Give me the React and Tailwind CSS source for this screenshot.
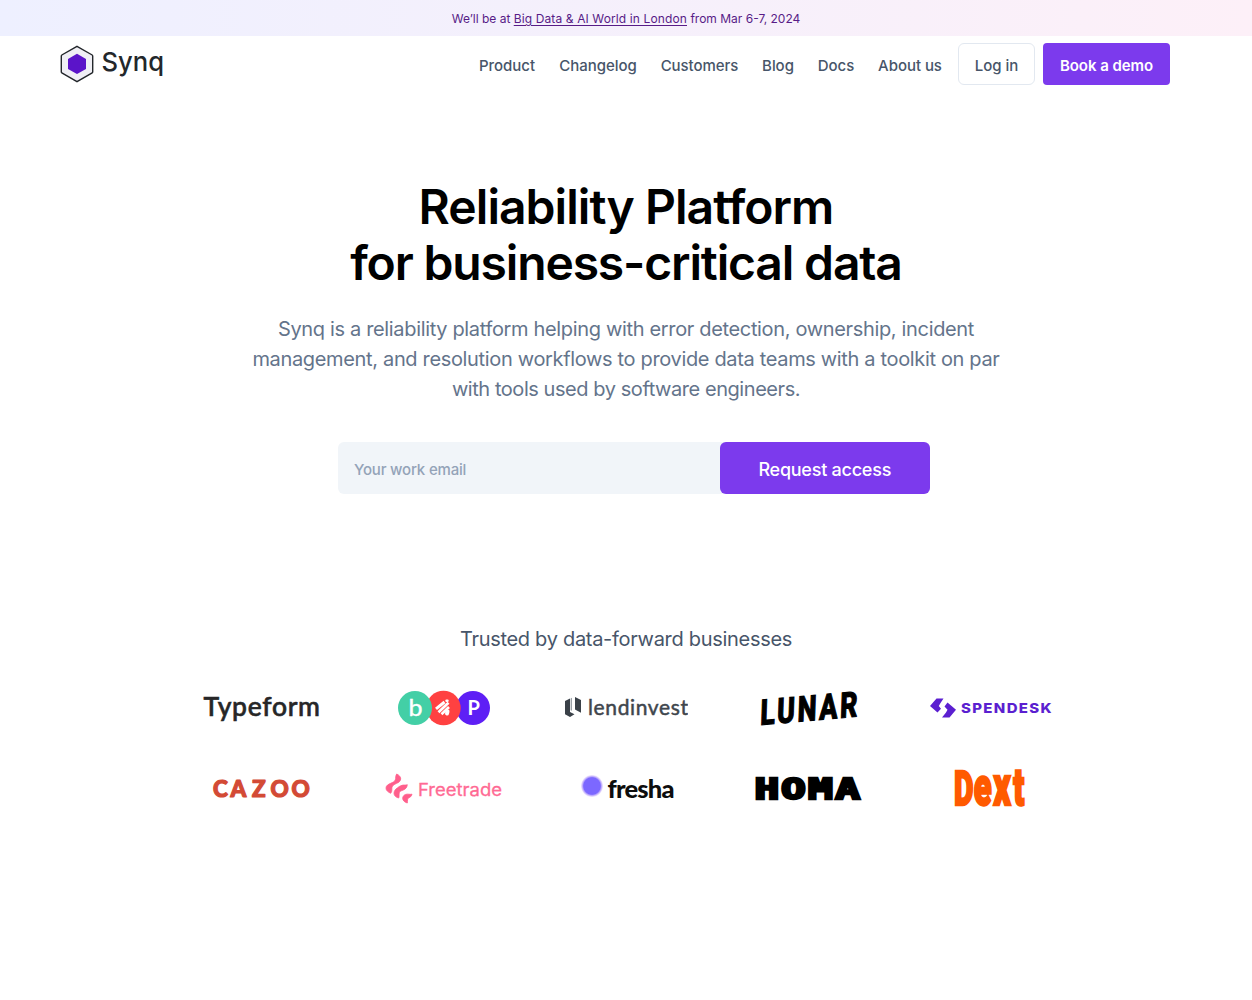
import clsx from 'clsx'

const navLinks = [
  { label: 'Product', width: 'w-[56px]' },
  { label: 'Changelog', width: 'w-[78px]' },
  { label: 'Customers', width: 'w-[77px]' },
  { label: 'Blog', width: 'w-[32px]' },
  { label: 'Docs', width: 'w-[36px]' },
  { label: 'About us', width: 'w-[64px]' },
]

function Banner() {
  return (
    <div className="flex h-9 items-center justify-center bg-gradient-to-r from-[#eef0ff] to-[#fdf0f8] pt-0.5 text-[12px] tracking-[0px] text-[#581c87]">
      <p>
        We’ll be at{' '}
        <a href="#" className="tracking-[0.12px] underline underline-offset-2">Big Data &amp; AI World in London</a>
        {' '}from Mar 6-7, 2024
      </p>
    </div>
  )
}

function SynqLogo() {
  return (
    <svg width="108" height="40" viewBox="0 0 108 40" className="shrink-0">
      <path d="M17 2.3 L32.2 11 Q32.7 11.3 32.7 11.9 V28 Q32.7 28.600 32.2 28.900 L17 37.600 L1.8 28.900 Q1.3 28.600 1.3 28 V11.900 Q1.3 11.300 1.8 11 Z" fill="#f0eff5" stroke="#23272b" strokeWidth="1.4" />
      <path d="M17 9.8 L26 14.9 V24.9 L17 30 L8 24.9 V14.9 Z" fill="#5b14c9" />
      <text x="41.500" y="27" fontFamily="Inter, sans-serif" fontSize="26" fontWeight="500" fill="#23272b" textLength="62.500" lengthAdjust="spacingAndGlyphs">Synq</text>
    </svg>
  )
}

function Header() {
  return (
    <header className="flex h-14 items-center justify-between pr-[82px] pl-[60px]">
      <SynqLogo />
      <div className="flex items-center text-[15px] font-medium tracking-[-0.05px] text-[#475569]">
        <nav className="flex gap-6 pt-1 whitespace-nowrap">
          {navLinks.map((link) => (
            <a key={link.label} href="#" className={clsx('flex justify-center', link.width)}>
              {link.label}
            </a>
          ))}
        </nav>
        <a href="#" className="ml-4 flex h-[42px] w-[77px] items-center justify-center rounded-md border border-[#e2e8f0] pt-1">
          Log in
        </a>
        <a href="#" className="ml-2 flex h-[42px] w-[127px] items-center justify-center rounded bg-[#7c3aed] pt-1 font-semibold text-white">
          Book a demo
        </a>
      </div>
    </header>
  )
}

function Hero() {
  return (
    <section className="flex flex-col items-center pt-[87px] text-center">
      <h1 className="text-[48px] leading-[56px] font-semibold tracking-[-1.15px] text-black">
        <span className="tracking-[-0.95px]">Reliability Platform</span>
        <br />
        for business-critical data
      </h1>
      <p className="mt-[23px] text-[20px] leading-[30px] tracking-[-0.34px] whitespace-nowrap text-[#64748b]">
        Synq is a reliability platform helping with error detection, ownership, incident
        <br />
        management, and resolution workflows to provide data teams with a toolkit on par
        <br />
        <span className="tracking-[-0.44px]">with tools used by software engineers.</span>
      </p>
      <form className="mt-[38px] ml-4 flex h-[52px] w-[592px] rounded-md bg-[#f1f5f9]">
        <input
          type="email"
          placeholder="Your work email"
          className="min-w-0 flex-1 px-4 pt-1 text-[15px] font-medium tracking-[-0.18px] outline-none placeholder:text-[#94a3b8]"
        />
        <button type="button" className="w-[210.5px] rounded-md bg-[#7c3aed] pt-0.5 text-[18px] font-medium tracking-[-0.24px] text-white">
          Request access
        </button>
      </form>
    </section>
  )
}

function Typeform() {
  return (
    <svg width="120" height="36" viewBox="0 0 120 36">
      <text x="2.500" y="25.500" fontFamily="Lato, sans-serif" fontSize="26.500" fontWeight="500" fill="#262627" stroke="#262627" strokeWidth="0.6" textLength="116.500" lengthAdjust="spacing">Typeform</text>
    </svg>
  )
}

function Brands() {
  return (
    <svg width="94" height="36" viewBox="0 0 94 36">
      <circle cx="76" cy="18" r="17" fill="#5e1ff5" />
      <circle cx="46.500" cy="18" r="17.200" fill="#ff4141" />
      <circle cx="18" cy="18" r="17" fill="#43cfa6" />
      <text x="11.500" y="26" fontFamily="Lato, sans-serif" fontSize="23" fontWeight="400" fill="#fff" stroke="#fff" strokeWidth="0.4" textLength="14" lengthAdjust="spacingAndGlyphs">b</text>
      <text x="70.500" y="25" fontFamily="Lato, sans-serif" fontSize="20" fontWeight="700" fill="#fff">P</text>
      <g stroke="#fff" fill="none">
        <path d="M39 18.800 L47.500 12" strokeWidth="3" />
        <path d="M41.500 22.300 L51.500 12.800" strokeWidth="2.800" />
        <path d="M44.500 24.300 L52 17" strokeWidth="2.600" />
        <path d="M50 23.500 L50.500 21.500" strokeWidth="4" strokeLinecap="round" />
        <path d="M49.500 10.800 H50.500" strokeWidth="2.400" strokeLinecap="round" />
      </g>
    </svg>
  )
}

function Lendinvest() {
  return (
    <svg width="124" height="36" viewBox="0 0 124 36">
      <g fill="#3a4148">
        <path d="M1 11 L6 8.500 V22 L10.500 24.300 L6 27 L1 24.300 Z" />
        <path d="M11 7 L17 10 V22.800 L11 19.500 Z" />
        <path d="M6.600 8.500 L8 7.800 V20.800 L6.600 20.200 Z" fill="#9aa0a6" />
      </g>
      <text x="24" y="25" fontFamily="Lato, sans-serif" fontSize="21" fontWeight="400" fill="#3f464d" stroke="#3f464d" strokeWidth="0.5" textLength="100" lengthAdjust="spacing">lendinvest</text>
    </svg>
  )
}

function Lunar() {
  return (
    <svg width="120" height="56" viewBox="0 0 120 56" className="shrink-0 overflow-visible">
      <g transform="translate(12 45) rotate(-5) skewX(-7) scale(0.770 1)">
        <text x="0" y="0" fontFamily="Roboto, sans-serif" fontSize="35" fontWeight="800" letterSpacing="3.400" fill="#000" stroke="#000" strokeWidth="1.200">LUNAR</text>
      </g>
    </svg>
  )
}

function Spendesk() {
  return (
    <svg width="124" height="36" viewBox="0 0 124 36">
      <g fill="#5b1fd0">
        <path d="M1 16 L7.500 8.500 H14.500 L11.500 13 L9.800 16 L12 18.800 L8.500 22.500 Z" />
        <path d="M27 19.800 L20.500 27.500 H13 L17 22.500 L18.500 19.800 L15.500 16.500 L18.500 12.500 Z" />
      </g>
      <text x="32" y="22.500" fontFamily="Inter, sans-serif" fontSize="13.500" fontWeight="800" letterSpacing="1.200" fill="#5b1fd0" textLength="92" lengthAdjust="spacingAndGlyphs">SPENDESK</text>
    </svg>
  )
}

function Cazoo() {
  return (
    <svg width="98" height="36" viewBox="0 0 98 36" className="overflow-visible">
      <text x="1 18.500 40 58.500 79.500" y="26.500" fontFamily="Lato, sans-serif" fontSize="22.500" fontWeight="900" fill="#d34a35" stroke="#d34a35" strokeWidth="1.200" strokeLinejoin="round">CAZOO</text>
    </svg>
  )
}

function Freetrade() {
  return (
    <svg width="118" height="36" viewBox="0 0 118 36">
      <g fill="#ff5f8c" stroke="#ff5f8c" strokeWidth="0.800" strokeLinejoin="round">
        <path d="M11.700 4 C14 5 16 7 15.700 9 C15.500 11.500 13.500 12.500 11.700 13.300 C9 14.500 7.500 15.500 7 17.300 C6.500 19.500 7.500 21 5.700 23.300 C3 22 1 20.500 1 18 C1 15.500 3.500 14.300 5.700 13.300 C8 12.300 9.700 11.500 10.300 10 C11 8 10.300 6 11.700 4 Z" />
        <path d="M22.300 14.700 C22 17.500 20.500 19.200 18.300 20 C16 20.900 14.700 21.300 14.300 22.700 C13.700 24.500 14.500 26 13.700 28 C11 27.500 9 25.500 9 23.300 C9 21 10.500 19 12.300 18 C14 16.500 15.500 15.800 17 15.300 C19 14.700 20.500 15.500 22.300 14.700 Z" />
        <path d="M27 24.200 C26.500 26.500 25 27.300 23.500 28 C22 29 22.800 30.500 22.300 33 C19.500 32.300 17.500 30.300 17.700 28 C18 26 19 25 20.700 24.400 C22.700 23.700 25 24.700 27 24.200 Z" />
      </g>
      <text x="33" y="25.500" fontFamily="Inter, sans-serif" fontSize="17.500" fontWeight="400" fill="#ff6a94" stroke="#ff6a94" strokeWidth="0.3" textLength="84" lengthAdjust="spacingAndGlyphs">Freetrade</text>
    </svg>
  )
}

function Fresha() {
  return (
    <svg width="98" height="40" viewBox="0 0 98 40" className="overflow-visible">
      <defs>
        <radialGradient id="fresha-dot">
          <stop offset="0.760" stopColor="#7c68ff" />
          <stop offset="1" stopColor="#c9a8f8" stopOpacity="0.250" />
        </radialGradient>
      </defs>
      <circle cx="15" cy="18" r="11" fill="url(#fresha-dot)" />
      <text x="30.500" y="30" fontFamily="Lato, sans-serif" fontSize="25.500" fontWeight="900" fill="#0d0d0d" textLength="67" lengthAdjust="spacing">fresha</text>
    </svg>
  )
}

function Homa() {
  return (
    <svg width="108" height="40" viewBox="0 0 108 40" className="overflow-visible">
      <g transform="translate(0 31) scale(1.420 1)">
        <text x="0.400 19.100 38 57.200" y="0" fontFamily="'DejaVu Sans Mono', monospace" fontSize="29" fontWeight="700" fill="#000" stroke="#000" strokeWidth="2.400">HOMA</text>
      </g>
    </svg>
  )
}

function Dext() {
  return (
    <svg width="80" height="72" viewBox="0 0 80 72" className="shrink-0 overflow-visible">
      <g transform="translate(3 53) scale(0.620 1)">
        <text y="0" fontFamily="Roboto, sans-serif" fontSize="48.500" fontWeight="900" fill="#ff5a00" stroke="#ff5a00" strokeWidth="2.400">
          <tspan x="0">D</tspan>
          <tspan x="31.800" fontSize="53">e</tspan>
          <tspan x="63.500" fontSize="55">x</tspan>
          <tspan x="95.500" fontSize="52">t</tspan>
        </text>
      </g>
    </svg>
  )
}

const customers = [Typeform, Brands, Lendinvest, Lunar, Spendesk, Cazoo, Freetrade, Fresha, Homa, Dext]

function Customers() {
  return (
    <section className="mt-[130px] flex flex-col items-center">
      <h2 className="text-[20px] leading-[30px] tracking-[-0.3px] text-[#475569]">Trusted by data-forward businesses</h2>
      <div className="mt-[34px] grid w-[912px] grid-cols-5 gap-y-10">
        {customers.map((Logo, i) => (
          <div key={i} className="flex h-10 items-center justify-center">
            <Logo />
          </div>
        ))}
      </div>
    </section>
  )
}

export default function App() {
  return (
    <div className="min-h-screen overflow-hidden bg-white font-['Inter',sans-serif]">
      <Banner />
      <Header />
      <Hero />
      <Customers />
    </div>
  )
}
